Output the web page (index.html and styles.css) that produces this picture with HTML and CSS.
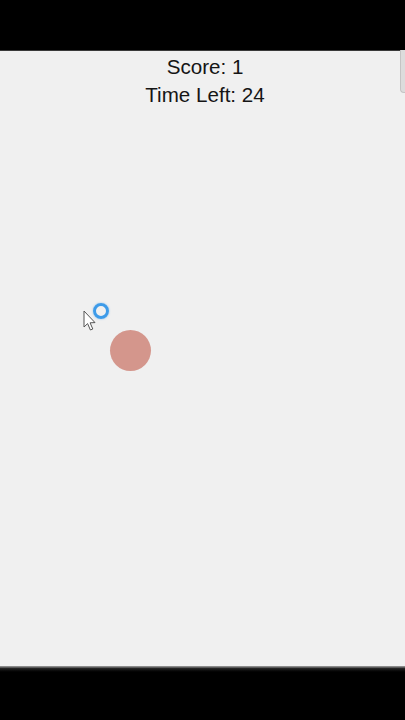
FILE: index.html
```html
<!DOCTYPE html>
<html>
<head>
<meta charset="utf-8">
<link rel="stylesheet" href="styles.css">
</head>
<body>
<div class="topbar"></div>
<main class="game">
  <div class="hud">
    <div class="line">Score: 1</div>
    <div class="line">Time Left: 24</div>
  </div>
  <div class="target"></div>
  <div class="tap-ring"></div>
  <svg class="cursor" width="14" height="22" viewBox="0 0 14 22">
    <path d="M1 1 L1 17 L4.6 13.6 L7.4 20 L9.8 19 L7.1 12.8 L12 12.6 Z" fill="#fff" stroke="#555" stroke-width="1" stroke-linejoin="round"/>
  </svg>
  <div class="scrollbar"></div>
</main>
<div class="bottombar"></div>
</body>
</html>
```

FILE: styles.css
```css
html, body {
  margin: 0;
  padding: 0;
  background: #000;
  width: 405px;
  height: 720px;
  overflow: hidden;
}
.topbar {
  height: 50px;
  background: #000;
}
.game {
  position: relative;
  height: 616px;
  background: #f0f0f0;
  box-shadow: inset 0 1px 0 #3a3a3a;
}
.hud {
  padding-top: 3px;
  padding-left: 5px;
  text-align: center;
  font-family: "Liberation Sans", Arial, sans-serif;
  font-size: 20.6px;
  line-height: 28px;
  color: #151515;
}
.target {
  position: absolute;
  left: 110px;
  top: 280px;
  width: 41px;
  height: 41px;
  border-radius: 50%;
  background: #d4968c;
}
.tap-ring {
  position: absolute;
  left: 93px;
  top: 253px;
  width: 10px;
  height: 10px;
  border: 3px solid #3d9be9;
  border-radius: 50%;
  box-shadow: 0 0 2px rgba(61,155,233,0.6);
}
.cursor {
  position: absolute;
  left: 83px;
  top: 260px;
}
.scrollbar {
  position: absolute;
  right: 0;
  top: 0;
  width: 4px;
  height: 42px;
  background: #dcdcdc;
  border-left: 1px solid #c4c4c4;
  border-bottom: 1px solid #c4c4c4;
  border-bottom-left-radius: 4px;
}
.bottombar {
  height: 54px;
  background: linear-gradient(#8a8a8a 0, #8a8a8a 1px, #2a2a2a 2px, #111 4px, #000 6px);
}
```
